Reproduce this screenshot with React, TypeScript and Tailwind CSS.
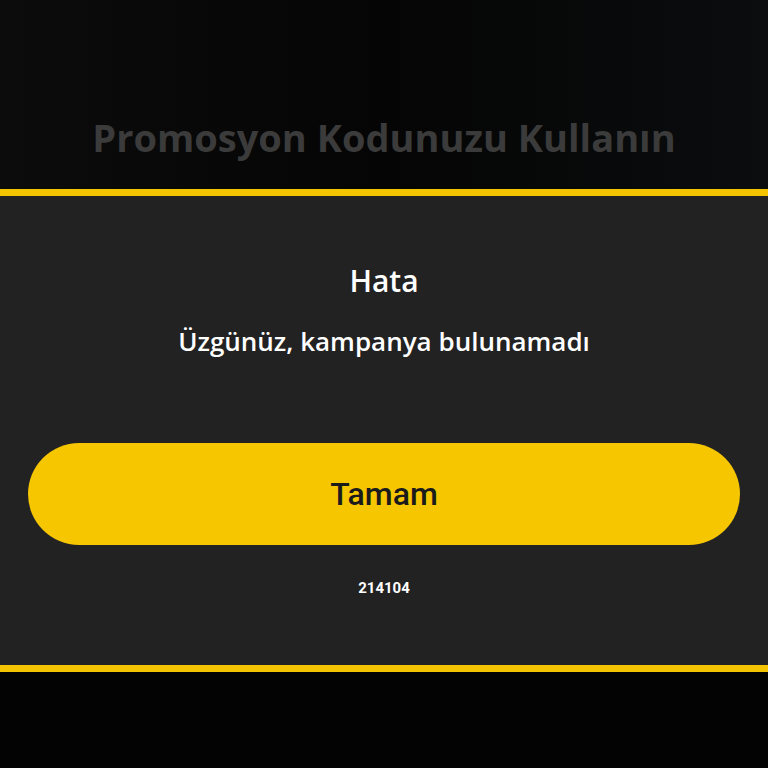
import React from "react";

export default function App() {
  return (
    <div className="relative flex h-[768px] w-[768px] flex-col overflow-hidden bg-[#070707]">
      {/* dim backdrop behind the dialog */}
      <div className="flex h-[189px] items-end justify-center bg-gradient-to-r from-[#0c0c0c] via-[#050505] to-[#0b0d0e] pb-[32px]">
        <h1 className="font-['Open_Sans',sans-serif] text-[38px] font-bold leading-[40px] text-[#3b3b3b]">
          Promosyon Kodunuzu Kullanın
        </h1>
      </div>

      <div className="h-[7px] bg-[#f5c400]" />
      <div className="flex h-[469px] flex-col items-center bg-[#222222] px-[28px] pt-[66px]">
        <h2 className="font-['Open_Sans',sans-serif] text-[30px] font-semibold leading-[38px] text-white">
          Hata
        </h2>
        <p className="mt-[24px] font-['Open_Sans',sans-serif] text-[26px] font-semibold leading-[34px] text-white">
          Üzgünüz, kampanya bulunamadı
        </p>
        <button className="mt-[85px] flex h-[102px] w-full items-center justify-center rounded-full bg-[#f6c600] font-['Roboto',sans-serif] text-[32px] font-medium text-[#1b1b1b]">
          Tamam
        </button>
        <div className="mt-[32px] font-['Roboto',sans-serif] text-[15px] font-bold text-white">
          214104
        </div>
      </div>
      <div className="h-[7px] bg-[#f5c400]" />
      <div className="flex-1 bg-[#030303]" />
    </div>
  );
}
